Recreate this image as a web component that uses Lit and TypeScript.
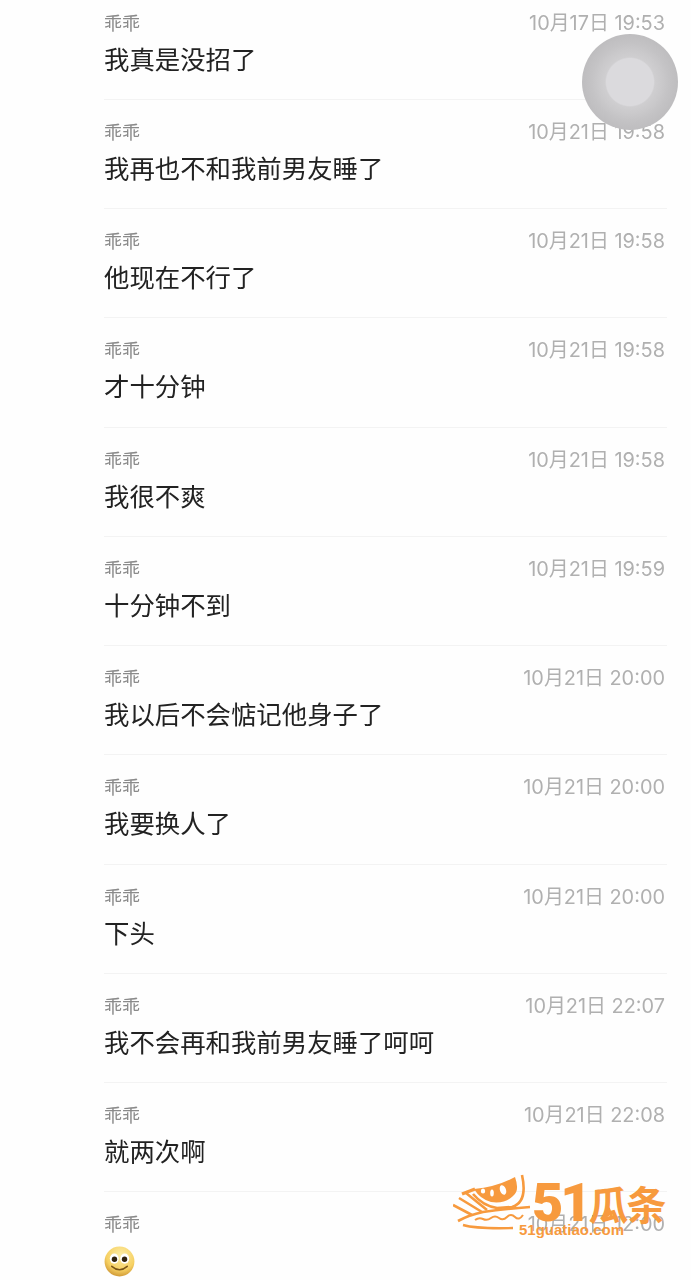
import { LitElement, html, css, svg } from "lit";
import { customElement } from "lit/decorators.js";

const rows: [string, string][] = [
  ["10月17日 19:53", "我真是没招了"],
  ["10月21日 19:58", "我再也不和我前男友睡了"],
  ["10月21日 19:58", "他现在不行了"],
  ["10月21日 19:58", "才十分钟"],
  ["10月21日 19:58", "我很不爽"],
  ["10月21日 19:59", "十分钟不到"],
  ["10月21日 20:00", "我以后不会惦记他身子了"],
  ["10月21日 20:00", "我要换人了"],
  ["10月21日 20:00", "下头"],
  ["10月21日 22:07", "我不会再和我前男友睡了呵呵"],
  ["10月21日 22:08", "就两次啊"],
  ["10月21日 12:00", ""],
];

const smile = svg`<svg class="emoji" viewBox="0 0 32 32" width="31" height="31">
  <defs><radialGradient id="f" cx="55%" cy="30%" r="75%"><stop offset="0" stop-color="#fdeea8"/><stop offset="0.65" stop-color="#f6d062"/><stop offset="1" stop-color="#c98f2e"/></radialGradient></defs>
  <circle cx="16" cy="16" r="15.4" fill="url(#f)"/>
  <ellipse cx="10.6" cy="13" rx="4.6" ry="5.2" fill="#fff"/><ellipse cx="21.4" cy="13" rx="4.6" ry="5.2" fill="#fff"/>
  <circle cx="10.8" cy="13.6" r="2.8" fill="#33240f"/><circle cx="21.2" cy="13.6" r="2.8" fill="#33240f"/>
  <path d="M8 21 Q16 28 24 21" fill="none" stroke="#7a5416" stroke-width="1.5" stroke-linecap="round"/>
</svg>`;

const melon = svg`<svg class="melon" viewBox="0 0 84 64" width="84" height="64" fill="#f79a3e">
  <path d="M21 15 Q44 13 62 3 Q67 17 60 22 Q52 30 38 28 Q27 25 21 15Z"/>
  <ellipse cx="30" cy="17" rx="2.2" ry="2.6" fill="#fff"/>
  <ellipse cx="39" cy="19" rx="1.8" ry="3.6" fill="#fff"/>
  <ellipse cx="50" cy="16" rx="3" ry="5" fill="#fff" transform="rotate(-20 50 16)"/>
  <path d="M69 1 Q75 28 59 33 L44 34 Q30 32 20 20" fill="none" stroke="#f79a3e" stroke-width="2.6"/>
  <path d="M9 20 L22 15" fill="none" stroke="#f79a3e" stroke-width="3.4"/>
  <path d="M13 19 L34 36 M6 24 L29 38 M0 31 L19 41" fill="none" stroke="#f79a3e" stroke-width="2.6"/>
  <path d="M5 47 Q16 41 30 38 Q50 35 77 33" fill="none" stroke="#f79a3e" stroke-width="2.6"/>
  <path d="M22 46 q4 -3 8 -1 t8 -1 t8 0 t8 -1 t8 0 t8 -2" fill="none" stroke="#f79a3e" stroke-width="2"/>
  <path d="M10 51 Q24 55 60 54" fill="none" stroke="#f79a3e" stroke-width="2.4"/>
</svg>`;

const star = svg`<svg class="star" viewBox="0 0 12 12" width="11" height="11"><path fill="#f79a3e" d="M6 0 L7.6 4.2 L12 4.4 L8.6 7.2 L9.7 11.6 L6 9.2 L2.3 11.6 L3.4 7.2 L0 4.4 L4.4 4.2Z"/></svg>`;

@customElement("app-root")
export class AppRoot extends LitElement {
  static styles = css`
    :host {
      display: block;
      position: relative;
      width: 691px;
      height: 1280px;
      overflow: hidden;
      background: #fefefe;
      font-family: "Noto Sans CJK SC", "Liberation Sans", sans-serif;
    }
    .list {
      display: flex;
      flex-direction: column;
      padding: 0 24px 0 104px;
      margin-top: -9.5px;
      filter: blur(0.45px);
    }
    .row {
      height: 109.27px;
      box-sizing: border-box;
      border-bottom: 1.5px solid #f3f3f3;
      flex: none;
      padding-top: 19px;
    }
    .row:last-child { border-bottom: 0; }
    .head {
      display: flex;
      justify-content: space-between;
      align-items: center;
      height: 26px;
    }
    .name { font-size: 18px; line-height: 24px; color: #8a8a8a; font-weight: 400; align-self: flex-start; }
    .time {
      font-family: Inter, "Noto Sans CJK SC", sans-serif;
      font-size: 19.9px;
      line-height: 26px;
      color: #b0b0b0;
      margin-right: 2px;
      white-space: pre;
    }
    .msg {
      font-size: 25.4px;
      line-height: 38px;
      color: #222;
      margin-top: 3px;
    }
    .emoji { display: block; margin-top: 9px; }
    .float {
      position: absolute;
      left: 581.5px;
      top: 34px;
      width: 96px;
      height: 96px;
      border-radius: 50%;
      background: radial-gradient(circle closest-side, #dbdadd 0 49%, #cfced0 52%, #cac9cb 66%, #c4c3c5 80%, #bebdbf 100%);
      filter: blur(0.5px);
    }
    .mark {
      position: absolute;
      left: 453px;
      top: 1174px;
      display: flex;
      align-items: flex-start;
      color: #f79a3e;
    }
    .melon { display: block; flex: none; }
    .brand {
      display: flex;
      flex-direction: column;
      margin-left: -5px;
    }
    .big {
      font-family: Roboto, "Noto Sans CJK SC", sans-serif;
      font-weight: 900;
      font-size: 54px;
      line-height: 48px;
      letter-spacing: -3px;
      display: flex;
      margin-top: 5px;
      white-space: nowrap;
    }
    .big span {
      font-family: "Noto Sans CJK SC", sans-serif;
      font-size: 40px;
      font-weight: 700;
      letter-spacing: -2px;
      margin-left: 0;
    }
    .star { position: absolute; left: 151px; top: 33px; }
    .url {
      position: absolute;
      left: 66px;
      top: 47px;
      font-family: "Liberation Sans", sans-serif;
      font-weight: 700;
      font-size: 15px;
      line-height: 18px;
      white-space: nowrap;
    }
  `;

  render() {
    return html`
      <div class="list">
        ${rows.map(
          ([t, m]) => html`<div class="row">
            <div class="head"><span class="name">乖乖</span><span class="time">${t}</span></div>
            ${m ? html`<div class="msg">${m}</div>` : smile}
          </div>`
        )}
      </div>
      <div class="float"></div>
      <div class="mark">
        ${melon}
        <div class="brand">
          <div class="big">51<span>瓜条</span></div>
          <div class="url">51guatiao.com</div>
        </div>
        ${star}
      </div>
    `;
  }
}
